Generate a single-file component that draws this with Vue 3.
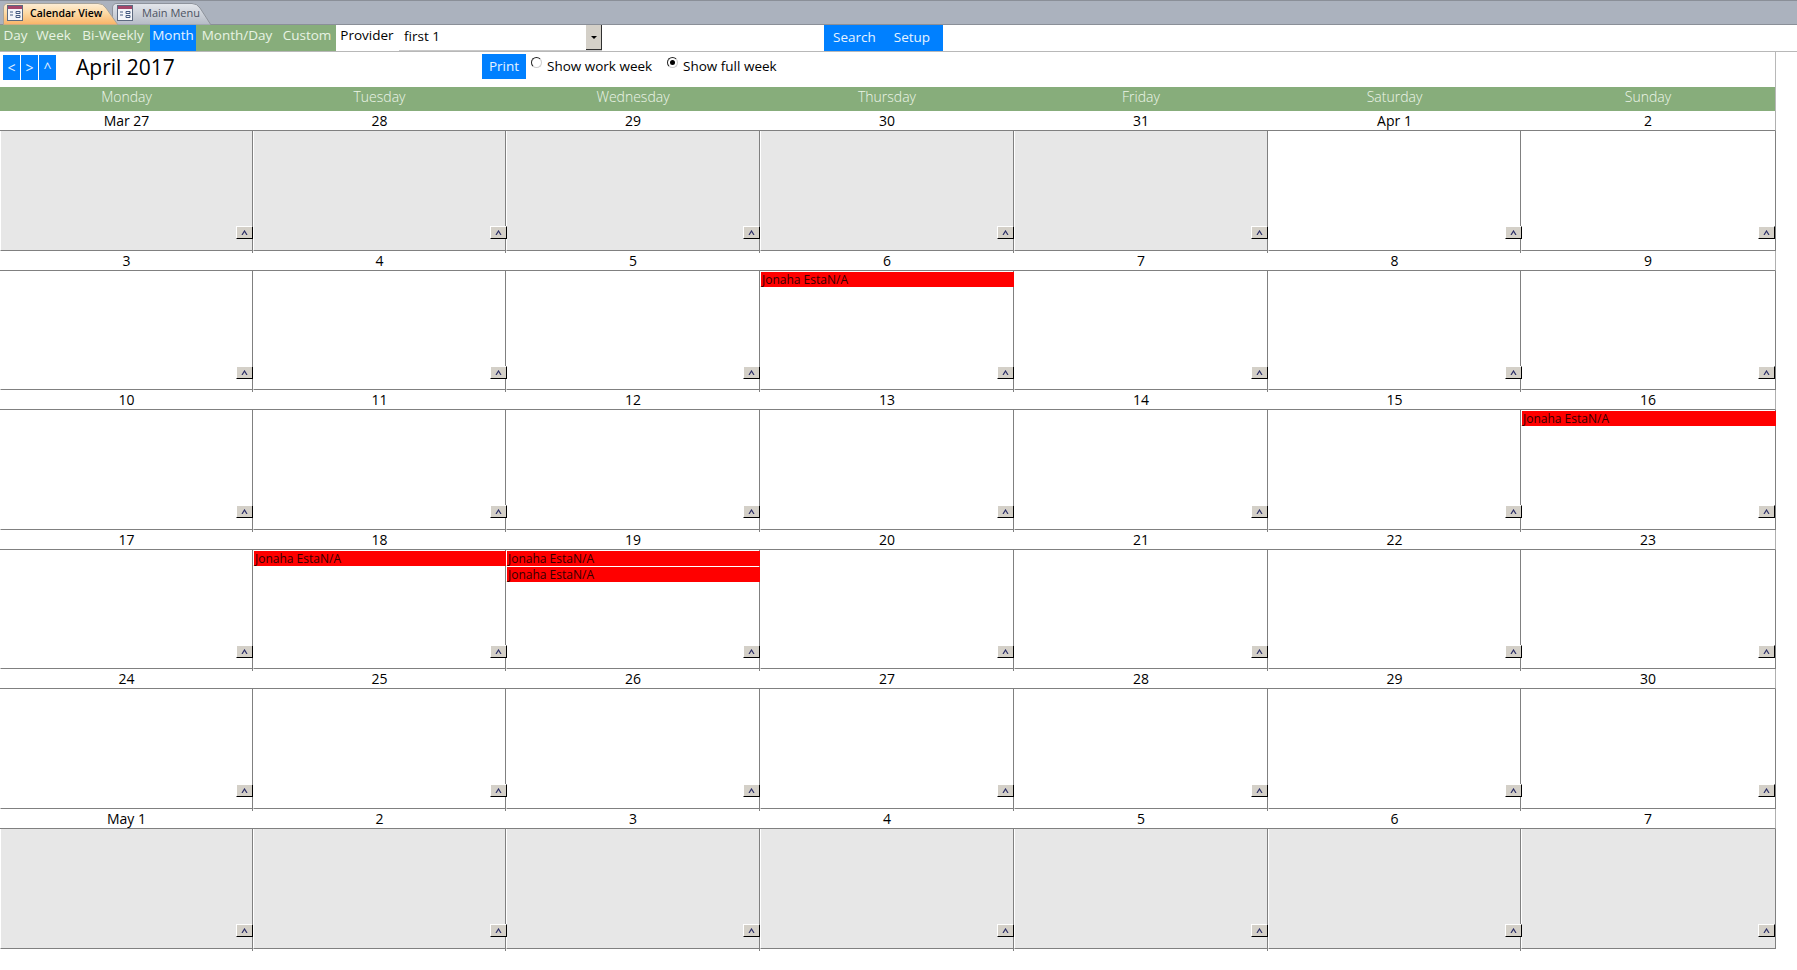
<script setup>
const navItems = [
  { label: 'Day', w: 31 },
  { label: 'Week', w: 45 },
  { label: 'Bi-Weekly', w: 74 },
  { label: 'Month', w: 46, active: true },
  { label: 'Month/Day', w: 82 },
  { label: 'Custom', w: 58 },
]
const dayNames = ['Monday', 'Tuesday', 'Wednesday', 'Thursday', 'Friday', 'Saturday', 'Sunday']
const ev = 'Jonaha EstaN/A'
const weeks = [
  { short: false, days: ['Mar 27', '28', '29', '30', '31', 'Apr 1', '2'], grey: [0, 1, 2, 3, 4], events: {} },
  { short: true, days: ['3', '4', '5', '6', '7', '8', '9'], grey: [], events: { 3: 1 } },
  { short: false, days: ['10', '11', '12', '13', '14', '15', '16'], grey: [], events: { 6: 1 } },
  { short: true, days: ['17', '18', '19', '20', '21', '22', '23'], grey: [], events: { 1: 1, 2: 2 } },
  { short: false, days: ['24', '25', '26', '27', '28', '29', '30'], grey: [], events: {} },
  { short: false, days: ['May 1', '2', '3', '4', '5', '6', '7'], grey: [0, 1, 2, 3, 4, 5, 6], events: {} },
]
</script>

<template>
  <div class="page">
    <div class="tabbar">
      <div class="tab tab-active">
        <svg class="tab-shape" width="116" height="22" viewBox="0 0 116 22">
          <defs>
            <linearGradient id="orange" x1="0" y1="0" x2="0" y2="1">
              <stop offset="0" stop-color="#fdeed6" />
              <stop offset="0.45" stop-color="#fcd9a4" />
              <stop offset="1" stop-color="#f9b264" />
            </linearGradient>
          </defs>
          <path d="M0.5 22V5Q0.5 0.5 5 0.5H95Q100 0.5 103 5L115 22Z" fill="url(#orange)" stroke="#a8a49a" />
        </svg>
        <svg class="form-icon" width="16" height="16" viewBox="0 0 16 16">
          <rect x="0.5" y="0.5" width="15" height="15" fill="#f4f6fa" stroke="#5d6a80" />
          <rect x="1" y="1" width="14" height="3" fill="#a5476a" />
          <path d="M3 7H6M3 10H6M9 6.5H13V8.5H9ZM9 10.5H13V12.5H9Z" stroke="#445a80" fill="none" />
        </svg>
        <span class="tab-text strong">Calendar View</span>
      </div>
      <div class="tab tab-plain">
        <svg class="tab-shape" width="100" height="22" viewBox="0 0 100 22">
          <defs>
            <linearGradient id="silver" x1="0" y1="0" x2="0" y2="1">
              <stop offset="0" stop-color="#e4e7ec" />
              <stop offset="1" stop-color="#b4bac5" />
            </linearGradient>
          </defs>
          <path d="M0.5 22V5Q0.5 0.5 5 0.5H80Q85 0.5 88 5L99 22Z" fill="url(#silver)" stroke="#8e939c" />
        </svg>
        <svg class="form-icon" width="16" height="16" viewBox="0 0 16 16">
          <rect x="0.5" y="0.5" width="15" height="15" fill="#f4f6fa" stroke="#5d6a80" />
          <rect x="1" y="1" width="14" height="3" fill="#a5476a" />
          <path d="M3 7H6M3 10H6M9 6.5H13V8.5H9ZM9 10.5H13V12.5H9Z" stroke="#445a80" fill="none" />
        </svg>
        <span class="tab-text">Main Menu</span>
      </div>
    </div>

    <div class="navrow">
      <div
        v-for="item in navItems"
        :key="item.label"
        class="nav-item"
        :class="{ active: item.active }"
        :style="{ width: item.w + 'px' }"
      >{{ item.label }}</div>
      <div class="provider">Provider</div>
      <div class="combo">
        <span class="combo-value">first 1</span>
        <span class="combo-btn"><i class="combo-arrow"></i></span>
      </div>
      <div class="actions">
        <span>Search</span>
        <span>Setup</span>
      </div>
    </div>

    <div class="sheet">
      <div class="toolbar">
        <div class="steppers">
          <span class="step">&lt;</span>
          <span class="step">&gt;</span>
          <span class="step">^</span>
        </div>
        <div class="title">April 2017</div>
        <div class="print">Print</div>
        <span class="radio"></span>
        <span class="radio-label first">Show work week</span>
        <span class="radio checked"></span>
        <span class="radio-label">Show full week</span>
      </div>

      <div class="days grid">
        <div v-for="d in dayNames" :key="d" class="day-name">{{ d }}</div>
      </div>
    </div>

    <div v-for="(w, wi) in weeks" :key="wi" class="week grid" :class="{ short: w.short }">
      <div v-for="d in w.days" :key="d" class="date">{{ d }}</div>
      <div
        v-for="(d, di) in w.days"
        :key="'c' + di"
        class="cell"
        :class="{ grey: w.grey.includes(di) }"
      >
        <div v-for="n in (w.events[di] || 0)" :key="n" class="event">{{ ev }}</div>
        <span class="more">
          <svg width="7" height="5" viewBox="0 0 7 5"><path d="M1 5L3.5 1L6 5" fill="none" stroke="#2c2f66" stroke-width="1.2" /></svg>
        </span>
      </div>
    </div>
  </div>
</template>

<style scoped>
.page {
  width: 1797px;
  height: 970px;
  overflow: hidden;
  background: #fff;
  font-family: "Open Sans", "Noto Sans", sans-serif;
  color: #000;
}
.tabbar {
  height: 25px;
  box-sizing: border-box;
  background: #abb2be;
  border-top: 1px solid #8a8f98;
  border-bottom: 1px solid #8a8f98;
  display: flex;
  padding: 2px 0 0 3px;
}
.tab {
  position: relative;
  height: 22px;
  display: flex;
  align-items: center;
  box-sizing: border-box;
  padding-bottom: 3px;
}
.tab-shape {
  position: absolute;
  left: 0;
  top: 0;
}
.tab-active {
  width: 109px;
  padding-left: 4px;
  z-index: 1;
}
.tab-plain {
  width: 100px;
  padding-left: 5px;
}
.form-icon {
  position: relative;
  flex: none;
}
.tab-text {
  position: relative;
  margin-left: 9px;
  font-size: 11px;
  color: #4c5362;
  white-space: nowrap;
}
.tab-text.strong {
  color: #000;
  font-weight: 600;
  font-size: 10.5px;
  margin-left: 7px;
}
.navrow {
  height: 27px;
  box-sizing: border-box;
  border-bottom: 1px solid #b8b8b8;
  display: flex;
  font-size: 13.5px;
  line-height: 20px;
}
.nav-item {
  background: #87ad7b;
  color: #e8f3e3;
  text-align: center;
  white-space: nowrap;
}
.nav-item.active {
  background: #0080ff;
  color: #e6f3ff;
}
.provider {
  width: 63px;
  text-align: center;
  white-space: nowrap;
  padding-right: 1px;
  box-sizing: border-box;
}
.combo {
  width: 203px;
  display: flex;
  justify-content: space-between;
  box-sizing: border-box;
  border-bottom: 1px solid #c8c8c8;
  margin-right: 222px;
}
.combo-value {
  padding: 1px 0 0 5px;
}
.combo-btn {
  width: 16px;
  box-sizing: border-box;
  background: #d4d0c8;
  border-right: 1px solid #303030;
  border-bottom: 1px solid #303030;
  display: flex;
  align-items: center;
  justify-content: center;
}
.combo-arrow {
  width: 0;
  height: 0;
  border-left: 3px solid transparent;
  border-right: 3px solid transparent;
  border-top: 3px solid #000;
}
.actions {
  width: 119px;
  background: #0080ff;
  color: #e6f3ff;
  display: flex;
  gap: 18px;
  padding: 2px 0 0 9px;
  box-sizing: border-box;
}
.sheet {
  width: 1776px;
  box-sizing: border-box;
  border-right: 1px solid #b8b8b8;
}
.toolbar {
  height: 35px;
  display: flex;
  align-items: flex-start;
  white-space: nowrap;
}
.steppers {
  display: flex;
  gap: 1px;
  margin: 3px 0 0 3px;
}
.step {
  width: 17px;
  height: 25px;
  background: #0080ff;
  color: #e6f3ff;
  font-size: 14px;
  line-height: 25px;
  text-align: center;
}
.title {
  width: 406px;
  margin-left: 20px;
  font-size: 21px;
  line-height: 30px;
}
.print {
  width: 44px;
  height: 25px;
  margin-top: 2px;
  background: #0080ff;
  color: #e6f3ff;
  font-size: 13.5px;
  line-height: 25px;
  text-align: center;
}
.radio {
  width: 11px;
  height: 11px;
  box-sizing: border-box;
  margin: 5px 0 0 5px;
  border-radius: 50%;
  border: 1px solid #222;
  border-right-color: #ccc;
  border-bottom-color: #ccc;
  background: #fff;
  position: relative;
}
.radio.checked::after {
  content: "";
  position: absolute;
  left: 2px;
  top: 2px;
  width: 5px;
  height: 5px;
  border-radius: 50%;
  background: #000;
}
.radio-label {
  margin-left: 5px;
  font-size: 13.5px;
  line-height: 20px;
  margin-top: 4px;
}
.radio-label.first {
  width: 115px;
}
.grid {
  display: grid;
  grid-template-columns: 253px 253px 254px 254px 254px 253px 255px;
}
.days {
  width: 1775px;
  height: 24px;
  grid-template-columns: 253px 253px 254px 254px 254px 253px 254px;
  background: #87ad7b;
}
.day-name {
  text-align: center;
  color: #edf5e9;
  font-size: 14px;
  font-weight: 300;
  line-height: 20px;
}
.week {
  width: 1776px;
  grid-template-rows: 20px 120px;
}
.week.short {
  grid-template-rows: 20px 119px;
}
.date {
  box-sizing: border-box;
  border-bottom: 1px solid #808080;
  text-align: center;
  font-size: 14px;
  line-height: 19px;
  white-space: nowrap;
}
.date:nth-child(7) {
  border-right: 1px solid #b0b0b0;
}
.cell {
  position: relative;
  box-sizing: border-box;
  border-right: 1px solid #808080;
  border-bottom: 1px solid #808080;
  border-left: 1px solid #fff;
  padding-top: 1px;
}
.cell::after {
  content: "";
  position: absolute;
  right: -1px;
  bottom: -3px;
  width: 1px;
  height: 2px;
  background: #808080;
}
.cell:nth-child(14)::after {
  display: none;
}
.cell.grey {
  background: #e7e7e7;
}
.event {
  position: relative;
  z-index: 1;
  height: 15px;
  margin: 0 -1px 1px 0;
  padding-left: 1px;
  background: #f00;
  color: #300;
  font-size: 12px;
  line-height: 15px;
  white-space: nowrap;
}
.more {
  position: absolute;
  z-index: 2;
  right: -1px;
  bottom: 11px;
  width: 17px;
  height: 13px;
  box-sizing: border-box;
  background: #d4d0c8;
  border-top: 1px solid #fff;
  border-left: 1px solid #fff;
  border-right: 1px solid #000;
  border-bottom: 1px solid #000;
  display: flex;
  align-items: center;
  justify-content: center;
}
.short .more {
  bottom: 10px;
}
.cell:nth-child(9) .more,
.cell:nth-child(13) .more {
  right: -2px;
}
.cell:nth-child(14) .more {
  right: 0;
}
.more svg {
  display: block;
}
</style>
